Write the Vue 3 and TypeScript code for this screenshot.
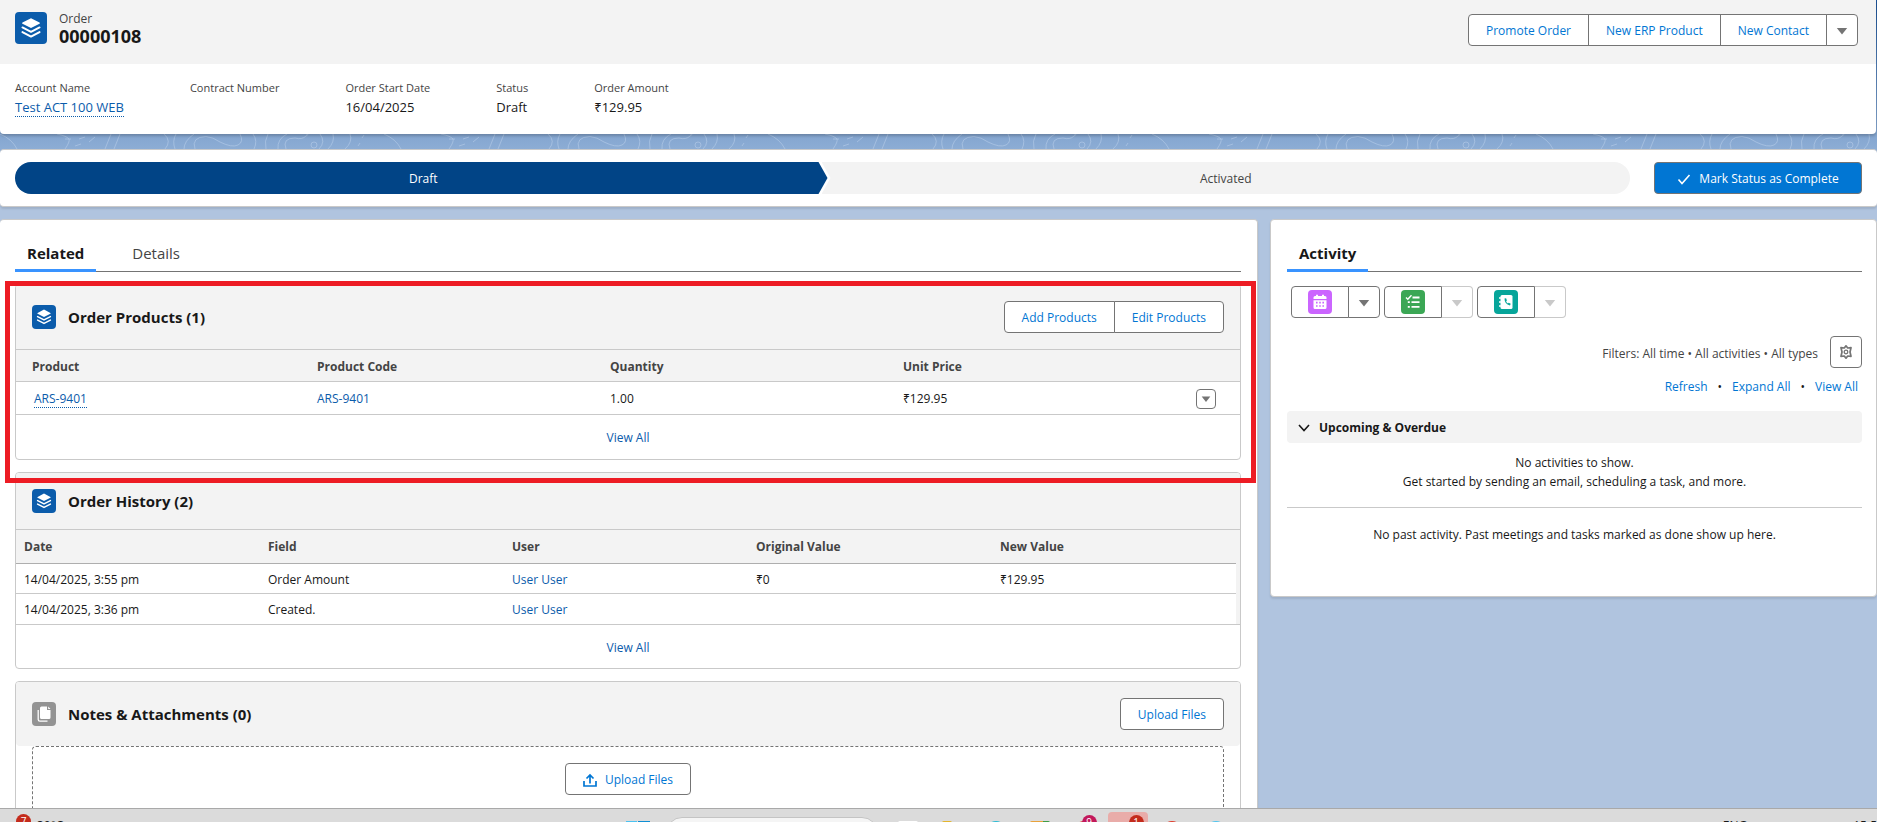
<script setup lang="ts">
interface Field {
  label: string
  value: string
  link?: boolean
}

interface HistoryRow {
  date: string
  field: string
  user: string
  original: string
  current: string
}

const fields: Field[] = [
  { label: 'Account Name', value: 'Test ACT 100 WEB', link: true },
  { label: 'Contract Number', value: '' },
  { label: 'Order Start Date', value: '16/04/2025' },
  { label: 'Status', value: 'Draft' },
  { label: 'Order Amount', value: '₹129.95' },
]

const history: HistoryRow[] = [
  { date: '14/04/2025, 3:55 pm', field: 'Order Amount', user: 'User User', original: '₹0', current: '₹129.95' },
  { date: '14/04/2025, 3:36 pm', field: 'Created.', user: 'User User', original: '', current: '' },
]

const activityKinds = [
  { name: 'event', label: 'New Event', enabled: true },
  { name: 'task', label: 'New Task', enabled: false },
  { name: 'call', label: 'Log a Call', enabled: false },
]
</script>

<template>
  <div class="screen">
    <svg width="0" height="0" class="defs" aria-hidden="true">
      <defs>
        <symbol id="layers" viewBox="0 0 24 24">
          <path d="M12 4.6 L18.4 7.9 Q19 8.4 18.4 8.8 L12 12 L5.6 8.8 Q5 8.4 5.6 7.9 Z" fill="#fff" />
          <path d="M5.6 11.6 L12 14.9 L18.4 11.6 M5.6 15.1 L12 18.4 L18.4 15.1" fill="none" stroke="#fff" stroke-width="1.5" stroke-linecap="round" stroke-linejoin="round" />
        </symbol>
        <symbol id="caret" viewBox="0 0 12 12">
          <path d="M0.8 3 H11.2 L6 9.6 Z" fill="currentColor" />
        </symbol>
      </defs>
    </svg>

    <div class="workspace">
      <svg class="topography" aria-hidden="true">
        <defs>
          <pattern id="contours" width="384" height="15" patternUnits="userSpaceOnUse">
            <g fill="none" stroke="#b3c9e6" stroke-opacity="0.65" stroke-width="1">
              <path d="M0 0 Q12 5 17 15 M57 0 Q67 2 69 5 Q70 8 65 15 M65 5 h6 M79 5 l6 -2 M75 12 l6 -2 M89 8 l6 -5 M105 15 L111 0 M114 15 L120 0" />
              <path d="M164 0 Q172 7 165 15 M176 0 Q172 7 175 15 M184 15 Q184 7 194 0" />
              <path d="M195 15 Q191 3 206 2.500 Q213 3 220 8 Q232 14 238 11 Q244 8 240 0" />
              <path d="M253 0 Q258 7 254 15 M268 0 Q264 7 266 15 M278 15 Q277 5 287 0 M286 15 Q282 4 295 4 Q302 6 306 2 Q310 0 306 0" />
              <path d="M311 11 a3 3 0 1 0 6 0 a3 3 0 1 0 -6 0 M320 0 Q326 8 319 15 M333 0 Q335 8 328 15 M350 0 Q353 8 345 15 M362 4 l2 -3 M358 12 l2 -3" />
            </g>
          </pattern>
        </defs>
        <rect width="100%" height="100%" fill="url(#contours)" />
      </svg>

      <header class="record">
        <div class="record-top">
          <div class="record-id">
            <span class="tile tile-lg"><svg><use href="#layers" /></svg></span>
            <div>
              <p class="object">Order</p>
              <h1>00000108</h1>
            </div>
          </div>
          <div class="btn-group">
            <button class="btn">Promote Order</button>
            <button class="btn">New ERP Product</button>
            <button class="btn">New Contact</button>
            <button class="btn btn-caret" aria-label="More actions"><svg class="caret"><use href="#caret" /></svg></button>
          </div>
        </div>
        <dl class="fields">
          <div v-for="f in fields" :key="f.label">
            <dt>{{ f.label }}</dt>
            <dd><a v-if="f.link" href="#" class="dotted">{{ f.value }}</a><template v-else>{{ f.value }}</template></dd>
          </div>
        </dl>
      </header>

      <section class="path panel">
        <div class="stages">
          <button class="stage current">Draft</button>
          <button class="stage">Activated</button>
        </div>
        <button class="btn brand">
          <svg class="check" viewBox="0 0 14 14"><path d="M1.500 7.500 L5 11.500 L12.500 3" fill="none" stroke="#fff" stroke-width="1.600" /></svg>
          Mark Status as Complete
        </button>
      </section>

      <main class="columns">
        <section class="panel related">
          <nav class="tabs">
            <a href="#" class="tab active">Related</a>
            <a href="#" class="tab">Details</a>
          </nav>

          <div class="cards">
            <div class="marker" aria-hidden="true"></div>

            <article class="card">
              <div class="card-head">
                <span class="tile"><svg><use href="#layers" /></svg></span>
                <h2>Order Products (1)</h2>
                <div class="btn-group">
                  <button class="btn">Add Products</button>
                  <button class="btn">Edit Products</button>
                </div>
              </div>
              <table class="products">
                <thead>
                  <tr><th>Product</th><th>Product Code</th><th>Quantity</th><th>Unit Price</th><td class="action"></td></tr>
                </thead>
                <tbody>
                  <tr>
                    <td><a href="#" class="dotted inset">ARS-9401</a></td>
                    <td><a href="#">ARS-9401</a></td>
                    <td>1.00</td>
                    <td>₹129.95</td>
                    <td class="action"><button class="row-menu" aria-label="Show actions"><svg class="caret"><use href="#caret" /></svg></button></td>
                  </tr>
                </tbody>
              </table>
              <a href="#" class="view-all">View All</a>
            </article>

            <article class="card">
              <div class="card-head">
                <span class="tile"><svg><use href="#layers" /></svg></span>
                <h2>Order History (2)</h2>
              </div>
              <div class="history-wrap">
                <table class="history">
                  <thead>
                    <tr><th>Date</th><th>Field</th><th>User</th><th>Original Value</th><th>New Value</th></tr>
                  </thead>
                  <tbody>
                    <tr v-for="h in history" :key="h.date">
                      <td>{{ h.date }}</td>
                      <td>{{ h.field }}</td>
                      <td><a href="#">{{ h.user }}</a></td>
                      <td>{{ h.original }}</td>
                      <td>{{ h.current }}</td>
                    </tr>
                  </tbody>
                </table>
              </div>
              <a href="#" class="view-all">View All</a>
            </article>

            <article class="card">
              <div class="card-head plain">
                <span class="tile gray">
                  <svg viewBox="0 0 24 24">
                    <path d="M9.500 4.500 h5.500 v3.500 h3.500 v7.500 q0 1.500 -1.500 1.500 h-7.500 q-1.500 0 -1.500 -1.500 v-9.500 q0 -1.500 1.500 -1.500 z M16.200 4.600 L18.500 6.900 h-2.300 z" fill="#fff" />
                    <path d="M6.200 8 v9.500 q0 1.700 1.700 1.700 h7.600" fill="none" stroke="#fff" stroke-width="1.300" />
                  </svg>
                </span>
                <h2>Notes &amp; Attachments (0)</h2>
                <button class="btn">Upload Files</button>
              </div>
              <div class="dropzone">
                <button class="btn">
                  <svg class="upload" viewBox="0 0 14 14"><path d="M1 8 V13 H13 V8 M7 10.500 V2.500 M3.500 5.500 L7 2 L10.500 5.500" fill="none" stroke="#0176d3" stroke-width="1.700" /></svg>
                  Upload Files
                </button>
              </div>
            </article>
          </div>
        </section>

        <aside class="panel activity">
          <nav class="tabs">
            <a href="#" class="tab active">Activity</a>
          </nav>
          <div class="kinds">
            <div v-for="k in activityKinds" :key="k.name" class="btn-group">
              <button class="btn kind" :aria-label="k.label">
                <span class="tile" :class="k.name">
                  <svg v-if="k.name === 'event'" viewBox="0 0 24 24">
                    <path d="M5.500 9 V7.500 Q5.500 6 7 6 H8 V4.800 H10 V6 H14 V4.800 H16 V6 H17 Q18.500 6 18.500 7.500 V9 Z M5.500 10.200 H18.500 V17.500 Q18.500 19 17 19 H7 Q5.500 19 5.500 17.500 Z" fill="#fff" />
                    <path d="M8 12.700 h1.600 m1.600 0 h1.600 m1.600 0 h1.600 M8 16 h1.600 m1.600 0 h1.600 m1.600 0 h1.600" stroke="#cb65ff" stroke-width="1.700" />
                  </svg>
                  <svg v-else-if="k.name === 'task'" viewBox="0 0 24 24" fill="none" stroke="#fff" stroke-width="1.800">
                    <path d="M11.500 7.500 H18.500 M10.500 12.200 H18.500 M10.500 16.900 H18.500 M6.800 12.200 H8.800 M6.800 16.900 H8.800" />
                    <path d="M5 7.500 L6.800 9.200 L10.500 5.200" stroke-width="1.400" />
                  </svg>
                  <svg v-else viewBox="0 0 24 24">
                    <rect x="6.500" y="5" width="12" height="14" rx="1.500" fill="#fff" />
                    <path d="M5 8 h3 M5 12 h3 M5 16 h3" stroke="#fff" stroke-width="1.400" />
                    <path d="M10.500 8.600 Q10.500 14.500 16 15.400 L16.700 13.700 L14.700 12.700 L13.900 13.400 Q12.500 12.600 12.100 11.200 L12.900 10.400 L12.100 8.300 Z" fill="#06a59a" />
                  </svg>
                </span>
              </button>
              <button class="btn btn-more" :disabled="!k.enabled" :aria-label="k.label + ' options'"><svg class="caret"><use href="#caret" /></svg></button>
            </div>
          </div>
          <div class="filters">
            <span>Filters: All time • All activities • All types</span>
            <button class="btn gear" aria-label="Timeline settings">
              <svg viewBox="0 0 16 16" fill="none" stroke="#747474">
                <path d="M8 1.800 L9.700 4 L13 3.700 L12 8 L13 12.300 L9.700 12 L8 14.200 L6.300 12 L3 12.300 L4 8 L3 3.700 L6.300 4 Z" stroke-width="1.700" stroke-linejoin="round" />
                <circle cx="8" cy="8" r="1.800" stroke-width="1.300" />
              </svg>
            </button>
          </div>
          <div class="timeline-links">
            <a href="#">Refresh</a><i>•</i><a href="#">Expand All</a><i>•</i><a href="#">View All</a>
          </div>
          <button class="upcoming">
            <svg viewBox="0 0 12 12"><path d="M1 3 L6 8.500 L11 3" fill="none" stroke="#181818" stroke-width="1.600" /></svg>
            Upcoming &amp; Overdue
          </button>
          <p class="empty">No activities to show.<br />Get started by sending an email, scheduling a task, and more.</p>
          <hr />
          <p class="past">No past activity. Past meetings and tasks marked as done show up here.</p>
        </aside>
      </main>
    </div>

    <footer class="taskbar">
      <div class="weather"><span class="badge">7</span><span>30°C</span></div>
      <div class="dock">
        <span class="windows"></span>
        <span class="search"><i></i></span>
        <span class="app white"></span>
        <span class="app gold"></span>
        <span class="app teal"></span>
        <span class="app office"></span>
        <span class="app red"><b>9</b></span>
        <span class="app selected"><b>1</b></span>
        <span class="app red"></span>
        <span class="app sky"></span>
      </div>
      <div class="tray"><span>ENG</span><span>15:5</span></div>
    </footer>
  </div>
</template>

<style>
html,
body {
  overflow: hidden;
}
</style>

<style scoped>
* {
  box-sizing: border-box;
}
.screen {
  display: flex;
  flex-direction: column;
  height: 100vh;
  overflow: hidden;
  font: 12px/18px "Open Sans", "Noto Sans", sans-serif;
  color: #181818;
  background: #b0c4df;
}
.defs {
  position: absolute;
}
.workspace {
  position: relative;
  flex: 1;
  min-height: 0;
  overflow: hidden;
  background: linear-gradient(#1b5297 0, #7c9fcb 120px, #8dadd5 150px, #b0c4df 200px);
}
.topography {
  position: absolute;
  left: 0;
  top: 134px;
  width: 100%;
  height: 15px;
}
a {
  color: #0b5cab;
  text-decoration: none;
}
h1,
h2,
p,
dl,
dd {
  margin: 0;
}
.dotted {
  border-bottom: 1px dotted #0b5cab;
}
.inset {
  margin-left: 2px;
}
.tile {
  display: flex;
  flex: none;
  width: 24px;
  height: 24px;
  border-radius: 4px;
  background: #0b5cab;
}
.tile svg {
  width: 100%;
  height: 100%;
}
.tile-lg {
  width: 32px;
  height: 32px;
}
.gray {
  background: #939393;
}
.event {
  background: #cb65ff;
}
.task {
  background: #3ba755;
}
.call {
  background: #06a59a;
}
.caret {
  width: 12px;
  height: 12px;
}
.btn {
  display: flex;
  align-items: center;
  justify-content: center;
  height: 32px;
  padding: 2px 17px 0;
  border: 1px solid #747474;
  border-radius: 4px;
  background: #fff;
  color: #0176d3;
  font: inherit;
  white-space: nowrap;
}
.btn-group {
  display: flex;
}
.btn-group .btn {
  border-radius: 0;
}
.btn-group .btn + .btn {
  margin-left: -1px;
}
.btn-group .btn:first-child {
  border-radius: 4px 0 0 4px;
}
.btn-group .btn:last-child {
  border-radius: 0 4px 4px 0;
}
.btn-group .btn-caret {
  width: 32px;
  padding: 2px 0 0;
  color: #747474;
}
.panel {
  position: relative;
  border: 1px solid #c9c9c9;
  border-radius: 4px;
  background: #fff;
  box-shadow: 0 2px 2px rgba(0, 0, 0, 0.1);
}

.record {
  position: relative;
  margin-right: 1px;
  border-radius: 0 0 4px 4px;
  background: #fff;
  box-shadow: 0 2px 3px rgba(0, 0, 0, 0.2);
}
.record-top {
  display: flex;
  align-items: flex-start;
  justify-content: space-between;
  height: 64px;
  padding: 12px 18px 0 15px;
  background: #f3f3f3;
}
.record-top .btn-group {
  margin-top: 2px;
}
.record-id {
  display: flex;
  gap: 12px;
}
.object {
  line-height: 14px;
  color: #444;
}
h1 {
  font-size: 18px;
  line-height: 20px;
}
.fields {
  display: flex;
  gap: 66px;
  padding: 14px 15px 18px;
}
dt {
  font-size: 11px;
  line-height: 20px;
  color: #444;
}
dd {
  font-size: 13px;
  line-height: 18px;
}

.path {
  display: flex;
  gap: 24px;
  margin-top: 15px;
  padding: 12px 15px;
}
.path.panel {
  border-left: 0;
  border-right: 0;
}
.stages {
  display: flex;
  flex: 1;
  border-radius: 16px;
  overflow: hidden;
}
.stage {
  flex: 1;
  height: 32px;
  padding: 2px 0 0;
  border: 0;
  background: #f3f3f3;
  color: #444;
  font: inherit;
  clip-path: polygon(0 0, 100% 0, 100% 100%, 0 100%, 9px 50%);
}
.stage.current {
  margin-right: -6px;
  padding-left: 4px;
  background: #014486;
  color: #fff;
  clip-path: polygon(0 0, calc(100% - 9px) 0, 100% 50%, calc(100% - 9px) 100%, 0 100%);
}
.brand {
  gap: 8px;
  width: 208px;
  background: #0176d3;
  color: #fff;
}
.check,
.upload {
  width: 14px;
  height: 14px;
}

.columns {
  display: grid;
  grid-template-columns: 1258fr 607fr;
  gap: 12px;
  align-items: start;
  margin-top: 12px;
}
.related {
  padding: 0 16px 0 15px;
  border-left: 0;
}
.activity {
  padding: 0 14px 52px 16px;
}
.tabs {
  display: flex;
  height: 52px;
  border-bottom: 1px solid #747474;
}
.tab {
  padding: 21px 12px 0;
  margin-bottom: -1px;
  margin-right: 24px;
  font-size: 15px;
  line-height: 24px;
  color: #444;
}
.tab.active {
  border-bottom: 3px solid #3993ff;
  font-weight: 700;
  color: #181818;
}
.cards {
  display: grid;
  gap: 12px;
  padding-top: 12px;
  position: relative;
}
.marker {
  position: absolute;
  z-index: 2;
  top: 9px;
  left: -10px;
  right: -15px;
  height: 202px;
  border: 5px solid #ed1c24;
}
.card {
  border: 1px solid #c9c9c9;
  border-radius: 4px;
  overflow: hidden;
  background: #fff;
}
.card-head {
  display: flex;
  align-items: center;
  gap: 12px;
  padding: 16px;
  background: #f3f3f3;
  border-bottom: 1px solid #c9c9c9;
}
.card-head.plain {
  border-bottom: 0;
  border-radius: 0 0 4px 4px;
}
h2 {
  flex: 1;
  font-size: 15px;
  line-height: 24px;
}
table {
  width: 100%;
  border-collapse: separate;
  border-spacing: 0;
  table-layout: fixed;
}
th {
  text-align: left;
  font-weight: 700;
  color: #444;
}
th,
td {
  padding: 2px 8px 0;
  border-bottom: 1px solid #c9c9c9;
}
thead {
  background: #f3f3f3;
}
.products tr {
  height: 32px;
}
.products tbody tr {
  height: 33px;
}
.products th:first-child,
.products td:first-child {
  padding-left: 16px;
}
.products .action {
  width: 52px;
}
.row-menu {
  display: flex;
  align-items: center;
  justify-content: center;
  width: 20px;
  height: 20px;
  padding: 0;
  border: 1px solid #747474;
  border-radius: 4px;
  background: #fff;
  color: #747474;
}
.row-menu .caret {
  width: 10px;
  height: 10px;
}
.view-all {
  display: block;
  padding: 14px 0 12px;
  text-align: center;
}
.history-wrap + .view-all {
  padding-bottom: 11px;
}
.history-wrap {
  padding-right: 4px;
  background: #f3f3f3;
  border-bottom: 1px solid #c9c9c9;
}
.history thead tr {
  height: 34px;
}
.history th {
  padding-top: 0;
  border-bottom-color: #aeaeae;
}
.history tbody {
  background: #fff;
}
.history tbody tr {
  height: 30px;
}
.history tbody tr:last-child td {
  border-bottom: 0;
}
.dropzone {
  display: flex;
  justify-content: center;
  margin: 0 16px 16px;
  padding: 16px;
  border: 1px dashed #747474;
  border-radius: 4px;
}
.dropzone .btn {
  gap: 8px;
}

.kinds {
  display: flex;
  gap: 4px;
  padding: 14px 4px 0;
}
.btn-group .kind {
  width: 58px;
  padding: 0;
}
.btn-group .btn-more {
  width: 32px;
  padding: 2px 0 0;
  color: #747474;
}
.btn-group .btn-more:disabled {
  border-color: #c9c9c9;
  border-left-width: 0;
  margin-left: 0;
  width: 31px;
  color: #c9c9c9;
}
.filters {
  display: flex;
  align-items: center;
  justify-content: flex-end;
  gap: 12px;
  margin-top: 18px;
  color: #444;
}
.filters span {
  padding-top: 3px;
}
.gear {
  width: 32px;
  padding: 0;
}
.gear svg {
  width: 16px;
  height: 16px;
}
.timeline-links {
  display: flex;
  justify-content: flex-end;
  gap: 10px;
  padding: 10px 4px 0;
}
.timeline-links a {
  color: #0176d3;
}
.timeline-links i {
  font-style: normal;
}
.upcoming {
  display: flex;
  align-items: center;
  gap: 9px;
  width: 100%;
  height: 32px;
  margin-top: 15px;
  padding: 1px 11px 0;
  border: 0;
  border-radius: 4px;
  background: #f3f3f3;
  color: #181818;
  font: inherit;
  font-weight: 700;
}
.upcoming svg {
  width: 12px;
  height: 12px;
}
.empty {
  padding: 10px 0 16px;
  line-height: 19px;
  text-align: center;
}
hr {
  margin: 0;
  border: 0;
  border-top: 1px solid #c9c9c9;
}
.past {
  padding-top: 18px;
  text-align: center;
}

.taskbar {
  display: grid;
  grid-template-columns: 1fr auto 1fr;
  flex: none;
  position: relative;
  height: 14px;
  overflow: hidden;
  border-top: 1px solid #a9a9a9;
  background: #dbdbdb;
}
.weather {
  display: flex;
  gap: 6px;
  padding: 5px 0 0 16px;
}
.weather span:last-child {
  padding-top: 3px;
}
.badge,
.app b {
  width: 15px;
  height: 15px;
  border-radius: 50%;
  background: #c42b1c;
  color: #fff;
  font-size: 10px;
  line-height: 14px;
  font-weight: 400;
  text-align: center;
}
.dock {
  display: flex;
  gap: 24px;
  align-items: flex-start;
  margin-right: 26px;
  padding-top: 3px;
}
.windows {
  width: 24px;
  height: 24px;
  margin-top: 9px;
  background: linear-gradient(90deg, #4cc2f1 11px, #dbdbdb 11px 12px, #0f8fd4 12px);
}
.search {
  width: 212px;
  height: 32px;
  margin: 5px -4px 0 -8px;
  border: 1px solid #c4c4c4;
  border-radius: 16px;
  background: #f5f5f5;
}
.search i {
  display: block;
  width: 8px;
  height: 8px;
  margin: 5px 0 0 178px;
  border-radius: 50%;
  background: #555;
}
.app {
  width: 20px;
  height: 20px;
  margin-top: 9px;
  border-radius: 50%;
}
.white {
  border-radius: 2px;
  background: #fff;
}
.gold {
  width: 10px;
  margin-left: 0;
  margin-right: 10px;
  border-radius: 2px;
  background: #e4b52c;
}
.teal {
  background: #2bbcd4;
}
.office {
  border-radius: 2px;
  background: linear-gradient(90deg, #e9a23b 13px, #3f9c46 13px);
}
.red {
  background: #e03e2d;
}
.app b {
  display: block;
  margin: -6px 0 0 8px;
  background: #c2185b;
}
.selected {
  width: 40px;
  height: 40px;
  margin: 0 -10px;
  border-radius: 4px;
  background: #e9aca9;
}
.app.selected b {
  margin: 3px 0 0 21px;
  background: #c42b1c;
}
.sky {
  background: #4fc6f0;
}
.tray {
  display: flex;
  justify-content: flex-end;
  gap: 106px;
  padding-top: 8px;
}
</style>
